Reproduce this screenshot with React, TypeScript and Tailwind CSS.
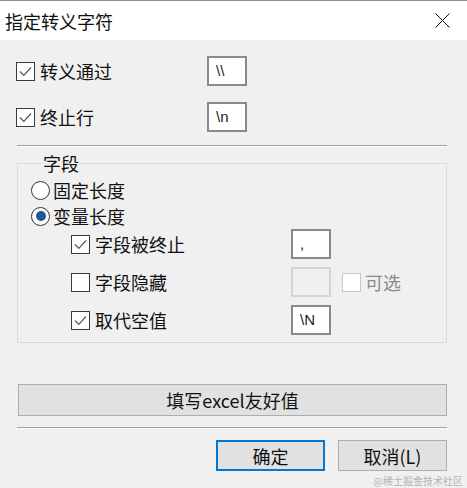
import React from "react";

const FONT = '"Noto Sans CJK SC", "Noto Sans", sans-serif';

function Check({ checked = false, disabled = false }: { checked?: boolean; disabled?: boolean }) {
  return (
    <div
      className={
        "w-[19px] h-[19px] shrink-0 bg-white border-[1.5px] flex items-center justify-center " +
        (disabled ? "border-[#c8c8c8]" : "border-[#3a3a3a]")
      }
    >
      {checked && (
        <svg width="17" height="17" viewBox="0 0 17 17">
          <polyline points="3,8.5 6.8,12.3 14,4.5" fill="none" stroke="#555" strokeWidth="1.2" />
        </svg>
      )}
    </div>
  );
}

function Radio({ checked = false }: { checked?: boolean }) {
  return (
    <div className="w-[19px] h-[19px] shrink-0 rounded-full bg-white border-[1.5px] border-[#333] flex items-center justify-center">
      {checked && <div className="w-[10px] h-[10px] rounded-full bg-[#1d5a92]" />}
    </div>
  );
}

function Field({ value = "", disabled = false }: { value?: string; disabled?: boolean }) {
  return (
    <div
      className={
        "w-[40px] h-[30px] border-2 flex items-center pl-[7px] text-[15px] text-[#222] " +
        (disabled ? "bg-[#f0f0f0] border-[#d4d4d4]" : "bg-white border-[#8a8a8a]")
      }
      style={{ fontFamily: '"Liberation Sans", Arial, sans-serif' }}
    >
      {value}
    </div>
  );
}

export default function App() {
  return (
    <div
      className="relative w-[467px] h-[488px] bg-[#f0f0f0] text-[#111] text-[18px] leading-[24px] overflow-hidden"
      style={{ fontFamily: FONT }}
    >
      {/* title bar */}
      <div className="h-[40px] bg-white border-t border-[#8c8c8c] flex items-center justify-between pl-[5px] pr-[17px]">
        <span className="text-[18px]">指定转义字符</span>
        <svg width="15" height="15" viewBox="0 0 15 15">
          <line x1="0.5" y1="0.5" x2="14.5" y2="14.5" stroke="#111" strokeWidth="1" />
          <line x1="14.5" y1="0.5" x2="0.5" y2="14.5" stroke="#111" strokeWidth="1" />
        </svg>
      </div>

      <div className="pl-[16px] pr-[20px] pt-[16px] flex flex-col">
        {/* top rows */}
        <div className="flex items-center h-[30px]">
          <div className="w-[191px] flex items-center gap-[5px]">
            <Check checked />
            <span>转义通过</span>
          </div>
          <Field value="\\" />
        </div>
        <div className="flex items-center h-[30px] mt-[16px]">
          <div className="w-[191px] flex items-center gap-[5px]">
            <Check checked />
            <span>终止行</span>
          </div>
          <Field value="\n" />
        </div>

        <div className="mt-[13px] ml-[1px] h-[2px] bg-[#a0a0a0] border-b border-white" />

        {/* group box */}
        <fieldset className="mt-[4px] ml-[1px] border border-[#dadada] pl-[13px] pr-[10px] pb-[7px]">
          <legend className="ml-[11px] px-[1px] leading-[24px]">字段</legend>
          <div className="flex items-center h-[26px] gap-[3px] mt-[2px]">
            <Radio />
            <span>固定长度</span>
          </div>
          <div className="flex items-center h-[26px] gap-[3px]">
            <Radio checked />
            <span>变量长度</span>
          </div>
          <div className="ml-[40px] flex flex-col gap-[8px]">
            <div className="flex items-center h-[30px]">
              <div className="w-[220px] flex items-center gap-[5px]">
                <Check checked />
                <span>字段被终止</span>
              </div>
              <Field value="," />
            </div>
            <div className="flex items-center h-[30px]">
              <div className="w-[220px] flex items-center gap-[5px]">
                <Check />
                <span>字段隐藏</span>
              </div>
              <Field disabled />
              <div className="ml-[11px] flex items-center gap-[4px]">
                <Check disabled />
                <span className="text-[#8a8a8a]">可选</span>
              </div>
            </div>
            <div className="flex items-center h-[30px]">
              <div className="w-[220px] flex items-center gap-[5px]">
                <Check checked />
                <span>取代空值</span>
              </div>
              <Field value="\N" />
            </div>
          </div>
        </fieldset>

        <button className="mt-[41px] ml-[2px] h-[32px] bg-[#e1e1e1] border-[1.5px] border-[#adadad] flex items-center justify-center text-[18px] text-[#111]">
          填写excel友好值
        </button>

        <div className="mt-[11px] ml-[1px] h-[2px] bg-[#a0a0a0] border-b border-white" />

        <div className="mt-[11px] flex justify-end gap-[13px]">
          <button className="w-[109px] h-[31px] bg-[#e1e1e1] border-2 border-[#0078d7] flex items-center justify-center text-[18px] text-[#111]">
            确定
          </button>
          <button className="w-[109px] h-[31px] bg-[#e1e1e1] border-[1.5px] border-[#adadad] flex items-center justify-center text-[18px] text-[#111]">
            取消(L)
          </button>
        </div>
      </div>

      <div className="absolute right-[4px] bottom-[1px] text-[10px] leading-[12px] text-[#b4b4b4]">
        @稀土掘金技术社区
      </div>
    </div>
  );
}
